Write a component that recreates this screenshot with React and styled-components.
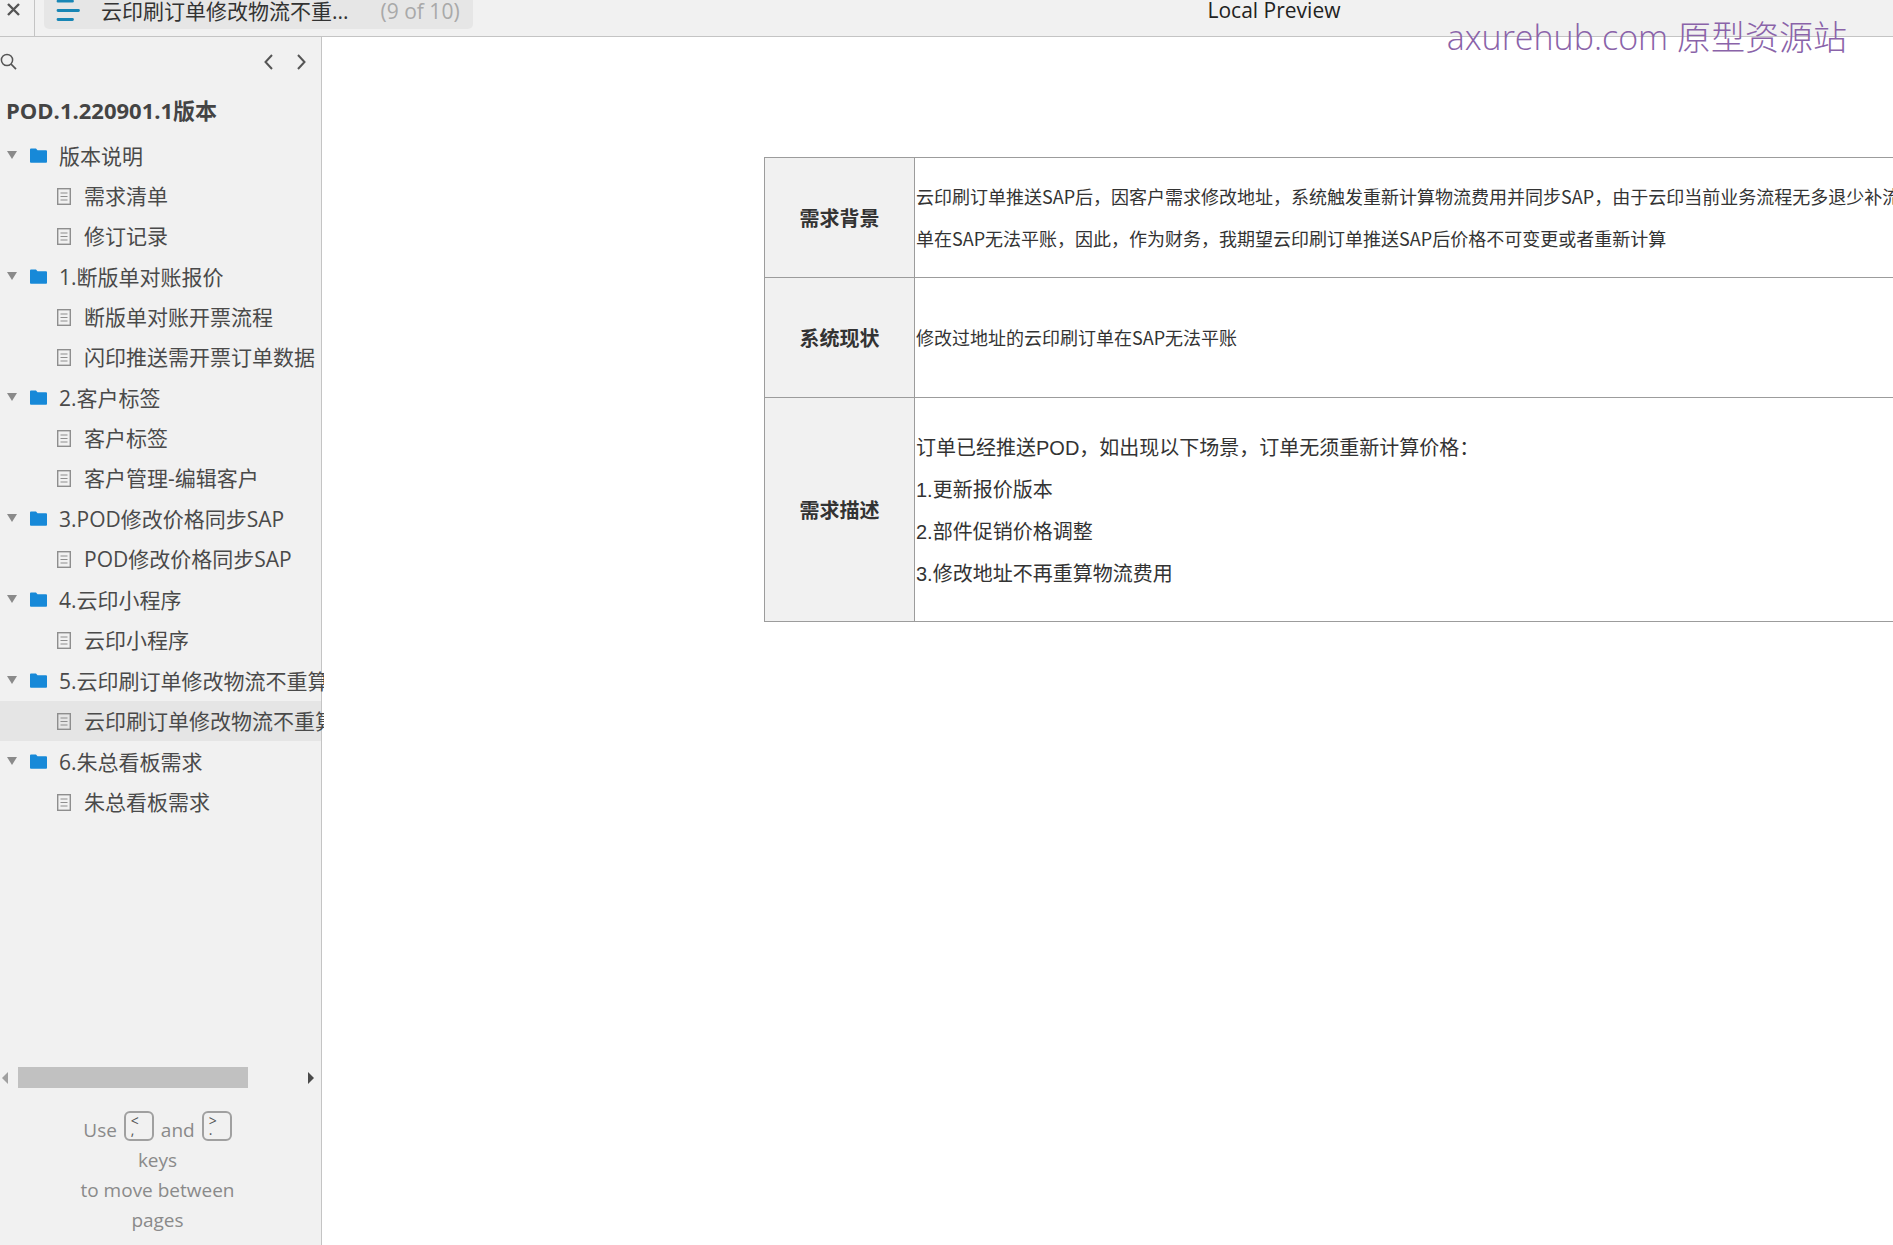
import React from "react";
import styled, { createGlobalStyle } from "styled-components";

const GlobalStyle = createGlobalStyle`
  * { box-sizing: border-box; }
  body {
    margin: 0;
    background: #fff;
    color: #4a4a4a;
    font-family: "Open Sans", "Noto Sans CJK SC", sans-serif;
    font-size: 21px;
    overflow: hidden;
  }
  button {
    padding: 0;
    border: 0;
    background: none;
    color: inherit;
    font: inherit;
    cursor: pointer;
  }
  svg { display: block; flex: none; }
`;

const Page = styled.div`
  display: flex;
  flex-direction: column;
  height: 100vh;
  overflow: hidden;
`;

const TopBar = styled.header`
  position: relative;
  display: flex;
  align-items: flex-start;
  flex: none;
  height: 37px;
  background: #f1f1f1;
  border-bottom: 1px solid #c4c4c4;
`;

const CloseButton = styled.button`
  display: flex;
  flex: none;
  width: 35px;
  height: 36px;
  padding: 3px 0 0 7px;
  border-right: 1px solid #c4c4c4;
`;

const PageTab = styled.button`
  display: flex;
  align-items: flex-start;
  flex: none;
  width: 429px;
  height: 29px;
  margin-left: 9px;
  padding-left: 12px;
  border-radius: 0 0 5px 5px;
  background: #e6e6e6;
  color: #333;
  line-height: 22px;
  white-space: nowrap;
`;

const TabTitle = styled.span`
  margin-left: 21px;
`;

const TabCount = styled.span`
  margin-left: 32px;
  color: #a9a9a9;
`;

const PreviewTitle = styled.div`
  flex: 1;
  padding-left: 182px;
  color: #222;
  line-height: 21px;
  text-align: center;
`;

const Watermark = styled.div`
  position: absolute;
  top: 16px;
  right: 46px;
  z-index: 3;
  color: #8a63a9;
  font-size: 34px;
  font-weight: 300;
  line-height: 42px;
  white-space: nowrap;
`;

const Body = styled.div`
  display: flex;
  flex: 1;
  min-height: 0;
`;

const Sidebar = styled.aside`
  position: relative;
  z-index: 1;
  display: flex;
  flex-direction: column;
  flex: none;
  width: 322px;
  background: #f1f1f1;
  border-right: 1px solid #c4c4c4;
`;

const SideTools = styled.div`
  display: flex;
  align-items: center;
  gap: 24px;
  height: 49px;
  padding-right: 15px;
`;

const IconButton = styled.button`
  display: flex;
  margin-right: ${(p) => (p.$push ? "auto" : "0")};
`;

const ProjectTitle = styled.h1`
  margin: 0;
  padding-left: 6px;
  color: #444;
  font-size: 22px;
  font-weight: 700;
  line-height: 49px;
`;

const Tree = styled.ul`
  flex: 1;
  min-height: 0;
  margin: 0 -3px 0 0;
  padding: 0;
  overflow: hidden;
  list-style: none;
`;

const TreeRow = styled.li`
  display: flex;
  align-items: center;
  height: ${(p) => (p.$folder ? 41 : 40)}px;
  margin-right: 3px;
  padding-left: ${(p) => (p.$folder ? 7 : 57)}px;
  gap: ${(p) => (p.$folder ? 12 : 13)}px;
  background: ${(p) => (p.$selected ? "#e5e5e5" : "transparent")};
`;

const TreeLink = styled.a`
  color: #4a4a4a;
  line-height: 40px;
  text-decoration: none;
  white-space: nowrap;
`;

const ScrollBar = styled.div`
  display: flex;
  align-items: center;
  height: 21px;
  padding: 0 7px 0 2px;
`;

const ScrollTrack = styled.div`
  flex: 1;
  height: 21px;
  margin: 0 10px;
`;

const ScrollThumb = styled.div`
  width: 82%;
  height: 100%;
  background: #c1c1c1;
`;

const KeyHelp = styled.p`
  flex: none;
  margin: 0;
  padding: 27px 6px 10px 0;
  color: #8a8a8a;
  font-size: 19px;
  line-height: 30px;
  text-align: center;
`;

const HelpLine = styled.span`
  display: flex;
  justify-content: center;
  height: 30px;
  gap: 7px;
`;

const KeyCap = styled.kbd`
  display: flex;
  flex-direction: column;
  width: 30px;
  height: 30px;
  margin-top: -4px;
  padding: 3px 0 0 5px;
  border: 2px solid #a0a0a0;
  border-radius: 6px;
  color: #555;
  font-family: "Open Sans", sans-serif;
  font-size: 14px;
  line-height: 9px;
  text-align: left;
`;

const Canvas = styled.main`
  flex: 1;
  min-width: 0;
  padding: 120px 0 0 442px;
  overflow: hidden;
`;

const SpecTable = styled.table`
  width: 100%;
  min-width: 1200px;
  border-collapse: collapse;
  table-layout: fixed;
  color: #333;
`;

const SpecHead = styled.th`
  width: 150px;
  padding: 0;
  border: 1px solid #9c9c9c;
  background: #f1f1f1;
  font-size: 20px;
  font-weight: 700;
`;

const SpecCell = styled.td`
  height: ${(p) => p.$height}px;
  padding: ${(p) => (p.$large ? "2px 0 0 1px" : "0 0 2px 1px")};
  border: 1px solid #9c9c9c;
  font-family: ${(p) => (p.$large ? '"Liberation Sans", ' : "")}"Noto Sans CJK SC", sans-serif;
  font-size: ${(p) => (p.$large ? 20 : 18)}px;
  line-height: 42px;
  white-space: nowrap;
`;

const Line = styled.div`
  height: 42px;
`;

const tree = [
  { name: "版本说明", pages: ["需求清单", "修订记录"] },
  { name: "1.断版单对账报价", pages: ["断版单对账开票流程", "闪印推送需开票订单数据"] },
  { name: "2.客户标签", pages: ["客户标签", "客户管理-编辑客户"] },
  { name: "3.POD修改价格同步SAP", pages: ["POD修改价格同步SAP"] },
  { name: "4.云印小程序", pages: ["云印小程序"] },
  { name: "5.云印刷订单修改物流不重算", pages: ["云印刷订单修改物流不重算"] },
  { name: "6.朱总看板需求", pages: ["朱总看板需求"] },
];
const selectedPage = "云印刷订单修改物流不重算";

const specs = [
  {
    title: "需求背景",
    height: 120,
    lines: [
      "云印刷订单推送SAP后，因客户需求修改地址，系统触发重新计算物流费用并同步SAP，由于云印当前业务流程无多退少补流",
      "单在SAP无法平账，因此，作为财务，我期望云印刷订单推送SAP后价格不可变更或者重新计算",
    ],
  },
  { title: "系统现状", height: 120, lines: ["修改过地址的云印刷订单在SAP无法平账"] },
  {
    title: "需求描述",
    height: 224,
    large: true,
    lines: [
      "订单已经推送POD，如出现以下场景，订单无须重新计算价格：",
      "1.更新报价版本",
      "2.部件促销价格调整",
      "3.修改地址不再重算物流费用",
    ],
  },
];

const CloseIcon = () => (
  <svg width="13" height="13" viewBox="0 0 13 13" stroke="#555" strokeWidth="2.4">
    <path d="M1 1l11 11M12 1L1 12" />
  </svg>
);

const MenuIcon = () => (
  <svg width="24" height="22" viewBox="0 0 24 22" stroke="#1886b5" strokeWidth="2.8" strokeLinecap="round">
    <path d="M2 1.2h14.5M2 10.5h20.5M2 19.5h14.5" />
  </svg>
);

const SearchIcon = () => (
  <svg width="17" height="17" viewBox="0 0 17 17" fill="none" stroke="#555" strokeWidth="1.5">
    <circle cx="7" cy="7" r="5.6" />
    <path d="M11 11l5 5.2" strokeWidth="1.8" />
  </svg>
);

const Chevron = ({ right }) => (
  <svg width="9" height="16" viewBox="0 0 9 16" fill="none" stroke="#555" strokeWidth="2">
    <path d={right ? "M1 1l6.5 7L1 15" : "M8 1L1.5 8 8 15"} />
  </svg>
);

const CaretIcon = () => (
  <svg width="11" height="12" viewBox="0 0 11 12" fill="#8a8a8a">
    <path d="M0 1h10L5 9z" />
  </svg>
);

const FolderIcon = () => (
  <svg width="17" height="15" viewBox="0 0 17 15" fill="#1789d8">
    <path d="M0 1.5Q0 .5 1 .5h5l1.5 1.8H16q1 0 1 1V14q0 .8-1 .8H1q-1 0-1-.8z" />
  </svg>
);

const DocIcon = () => (
  <svg width="14" height="17" viewBox="0 0 14 17" fill="none" stroke="#8e8e8e">
    <rect x=".7" y=".7" width="12.6" height="15.6" strokeWidth="1.4" />
    <path d="M3.5 5h7M3.5 8.5h7M3.5 12h7" strokeWidth="1.2" />
  </svg>
);

const ScrollArrow = ({ right }) => (
  <svg width="6" height="12" viewBox="0 0 6 12" fill={right ? "#4a4a4a" : "#a0a0a0"}>
    <path d={right ? "M0 0l6 6-6 6z" : "M6 0L0 6l6 6z"} />
  </svg>
);

export default function App() {
  return (
    <Page>
      <GlobalStyle />
      <TopBar>
        <CloseButton aria-label="Close"><CloseIcon /></CloseButton>
        <PageTab>
          <MenuIcon />
          <TabTitle>云印刷订单修改物流不重...</TabTitle>
          <TabCount>(9 of 10)</TabCount>
        </PageTab>
        <PreviewTitle>Local Preview</PreviewTitle>
        <Watermark>axurehub.com 原型资源站</Watermark>
      </TopBar>
      <Body>
        <Sidebar>
          <SideTools>
            <IconButton $push aria-label="Search"><SearchIcon /></IconButton>
            <IconButton aria-label="Previous page"><Chevron /></IconButton>
            <IconButton aria-label="Next page"><Chevron right /></IconButton>
          </SideTools>
          <ProjectTitle>POD.1.220901.1版本</ProjectTitle>
          <Tree>
            {tree.map((folder) => (
              <React.Fragment key={folder.name}>
                <TreeRow $folder>
                  <CaretIcon />
                  <FolderIcon />
                  <TreeLink href="#">{folder.name}</TreeLink>
                </TreeRow>
                {folder.pages.map((page) => (
                  <TreeRow key={page} $selected={page === selectedPage}>
                    <DocIcon />
                    <TreeLink href="#">{page}</TreeLink>
                  </TreeRow>
                ))}
              </React.Fragment>
            ))}
          </Tree>
          <ScrollBar>
            <ScrollArrow />
            <ScrollTrack><ScrollThumb /></ScrollTrack>
            <ScrollArrow right />
          </ScrollBar>
          <KeyHelp>
            <HelpLine>
              Use
              <KeyCap><span>&lt;</span><span>,</span></KeyCap>
              and
              <KeyCap><span>&gt;</span><span>.</span></KeyCap>
            </HelpLine>
            <HelpLine>keys</HelpLine>
            <HelpLine>to move between</HelpLine>
            <HelpLine>pages</HelpLine>
          </KeyHelp>
        </Sidebar>
        <Canvas>
          <SpecTable>
            <tbody>
              {specs.map((spec) => (
                <tr key={spec.title}>
                  <SpecHead scope="row">{spec.title}</SpecHead>
                  <SpecCell $height={spec.height} $large={spec.large}>
                    {spec.lines.map((line) => <Line key={line}>{line}</Line>)}
                  </SpecCell>
                </tr>
              ))}
            </tbody>
          </SpecTable>
        </Canvas>
      </Body>
    </Page>
  );
}
